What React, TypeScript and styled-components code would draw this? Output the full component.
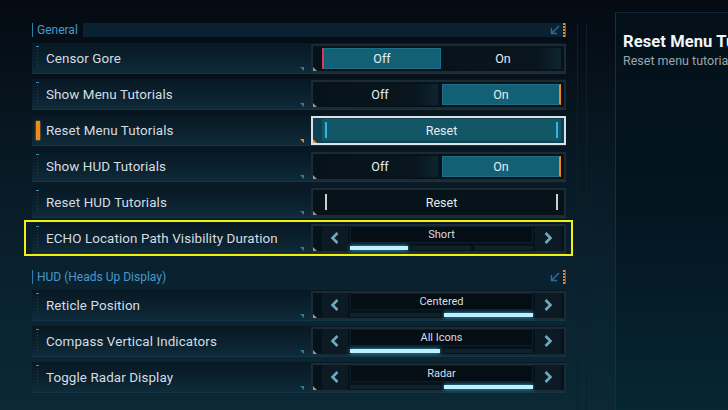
import React from 'react';
import styled, { createGlobalStyle, css } from 'styled-components';

const Global = createGlobalStyle`
  html, body {
    margin: 0;
    padding: 0;
    background: #040a12;
  }
  body {
    font-family: Roboto, "Liberation Sans", sans-serif;
    overflow: hidden;
  }
`;

const Page = styled.div`
  width: 728px;
  height: 410px;
  display: flex;
  padding-top: 12px;
  box-sizing: border-box;
  background: linear-gradient(180deg, #040a12 0%, #071620 30%, #0a2230 70%, #0b2834 100%);
  overflow: hidden;
`;

const Main = styled.div`
  width: 534px;
  margin-left: 32px;
  padding-top: 11px;
  display: flex;
  flex-direction: column;
`;

const Rails = styled.div`
  width: 10px;
  margin-left: 11px;
  margin-top: 12px;
  border-left: 1px solid #0e1f2a;
  border-right: 1px solid #0e1f2a;
  box-sizing: border-box;
`;

const Detail = styled.div`
  flex: 1;
  min-width: 0;
  margin-left: 28px;
  padding: 19px 0 0 7px;
  background: linear-gradient(180deg, #03101a 0%, #041520 50%, #062633 100%);
  border-left: 1px solid #12303d;
  border-top: 1px solid #0f2633;
  white-space: nowrap;
  overflow: hidden;
`;

const DetailTitle = styled.div`
  font-size: 16.5px;
  font-weight: 700;
  color: #f2f5f7;
  letter-spacing: 0.1px;
`;

const DetailText = styled.div`
  margin-top: 2px;
  font-size: 12.5px;
  color: #9aa6ad;
`;

const SectionHead = styled.div<{ $top?: number }>`
  display: flex;
  align-items: stretch;
  height: 14px;
  margin-top: ${(p) => p.$top ?? 0}px;
`;

const SectionTitle = styled.div`
  border-left: 1px solid #2a7fb0;
  padding-left: 4px;
  font-size: 12px;
  line-height: 14px;
  color: #4a98c8;
`;

const SectionBar = styled.div`
  flex: 1;
  margin-left: 5px;
  background: #0a2131;
  display: flex;
  justify-content: flex-end;
  align-items: center;
  gap: 3px;
`;

const DashMark = styled.div`
  width: 2px;
  height: 14px;
  background: repeating-linear-gradient(180deg, #e88a2a 0 2px, transparent 2px 3px);
  border-right: 1px solid #2a6f96;
`;

const Rows = styled.div`
  display: flex;
  flex-direction: column;
  gap: 5px;
  margin-top: 6px;
`;

const Row = styled.div<{ $highlight?: boolean }>`
  position: relative;
  height: 31px;
  display: flex;
  align-items: center;
  background: linear-gradient(180deg, #081823 0%, #0b2230 60%, #0f2b3a 100%);
  border-bottom: 1px solid #143545;
  box-sizing: border-box;
  ${(p) =>
    p.$highlight &&
    css`
      &::after {
        content: '';
        position: absolute;
        inset: -3px -7px -3px -8px;
        border: 2px solid #f2f010;
        pointer-events: none;
      }
    `}
`;

const Marker = styled.div<{ $focus?: boolean }>`
  width: 4px;
  align-self: stretch;
  margin: 3px 0 3px 4px;
  position: relative;
  ${(p) =>
    p.$focus
      ? css`
          &::before {
            content: '';
            position: absolute;
            left: 0;
            top: 3px;
            width: 4px;
            height: 19px;
            background: #f08a18;
            box-shadow: 0 0 2px #f0a040;
          }
        `
      : css`
          &::before {
            content: '';
            position: absolute;
            left: 0;
            top: 0;
            width: 3px;
            height: 1px;
            background: #3a90b0;
          }
          &::after {
            content: '';
            position: absolute;
            left: 1px;
            top: 3px;
            bottom: 0;
            width: 1px;
            background: repeating-linear-gradient(180deg, #1f4656 0 1px, transparent 1px 3px);
          }
        `}
`;

const Label = styled.div`
  flex: 1;
  padding-left: 6px;
  font-size: 13.4px;
  color: #d6dde1;
  letter-spacing: 0.1px;
`;

const CornerTick = styled.div<{ $focus?: boolean }>`
  width: 0;
  height: 0;
  align-self: flex-end;
  margin: 0 7px 2px 0;
  border-left: 4px solid transparent;
  border-top: 4px solid ${(p) => (p.$focus ? '#e08a20' : '#2c7ea0')};
`;

const Control = styled.div<{ $focus?: boolean }>`
  position: relative;
  width: 255px;
  height: 29px;
  box-sizing: border-box;
  border: 2px solid ${(p) => (p.$focus ? '#d9e2e6' : '#1b2b35')};
  background: ${(p) => (p.$focus ? '#0e4250' : '#07131b')};
  display: flex;
  align-items: center;
  padding: 0 3px 0 9px;
  &::before {
    content: '';
    position: absolute;
    left: 0;
    bottom: 0;
    width: 0;
    height: 0;
    border-left: 4px solid ${(p) => (p.$focus ? '#e08a20' : '#8a98a0')};
    border-top: 4px solid transparent;
  }
`;

const ToggleWrap = styled.div`
  flex: 1;
  height: 21px;
  display: flex;
  gap: 4px;
`;

const Segment = styled.div<{ $on?: boolean; $edge?: 'left' | 'right' }>`
  flex: 1;
  display: flex;
  align-items: center;
  justify-content: center;
  font-size: 12.5px;
  color: #e6ecef;
  background: ${(p) => (p.$on ? '#136075' : 'linear-gradient(90deg, #07131b 0%, #09161e 80%, #0d2530 100%)')};
  box-sizing: border-box;
  ${(p) => p.$on && css`border: 1px solid #1a7088;`}
  ${(p) => p.$on && p.$edge === 'left' && css`border-left: 2px solid #d83a5c;`}
  ${(p) => p.$on && p.$edge === 'right' && css`border-right: 2px solid #ee8a24;`}
`;

const ResetBtn = styled.div<{ $focus?: boolean }>`
  flex: 1;
  height: 22px;
  display: flex;
  align-items: center;
  justify-content: space-between;
  padding: 0 3px;
  box-sizing: border-box;
  background: ${(p) => (p.$focus ? '#135767' : '#07131b')};
  font-size: 12.5px;
  color: #e6ecef;
`;

const Bar = styled.div<{ $focus?: boolean }>`
  width: 2px;
  height: 16px;
  background: ${(p) => (p.$focus ? '#29b8e8' : '#c8d0d4')};
`;

const ArrowBox = styled.div`
  width: 26px;
  height: 25px;
  display: flex;
  align-items: center;
  justify-content: center;
  background: #0b1a23;
`;

const Center = styled.div`
  flex: 1;
  height: 25px;
  margin: 0 2px;
  display: flex;
  flex-direction: column;
`;

const Value = styled.div`
  height: 17px;
  display: flex;
  align-items: center;
  justify-content: center;
  background: #050e15;
  border: 1px solid #0d1e28;
  box-sizing: border-box;
  font-size: 11px;
  color: #d6dde1;
`;

const Steps = styled.div`
  margin-top: 3px;
  height: 4px;
  display: flex;
  gap: 4px;
`;

const Step = styled.div<{ $on?: boolean }>`
  flex: 1;
  background: ${(p) => (p.$on ? '#bdf1ff' : '#0e222d')};
  ${(p) => p.$on && css`box-shadow: 0 0 4px #3cc0e8;`}
`;

const Chevron = ({ dir }: { dir: 'left' | 'right' }) => (
  <svg width="10" height="12" viewBox="0 0 10 12">
    <path
      d={dir === 'left' ? 'M7.5 1 L2.5 6 L7.5 11' : 'M2.5 1 L7.5 6 L2.5 11'}
      fill="none"
      stroke="#6fa8c0"
      strokeWidth="2.6"
    />
  </svg>
);

const CornerIcon = () => (
  <svg width="10" height="10" viewBox="0 0 10 10">
    <path d="M9 1 L2 8 M1.5 3 V8.5 H7" fill="none" stroke="#2a6f96" strokeWidth="1.4" />
  </svg>
);

type Setting =
  | { label: string; kind: 'toggle'; on: boolean }
  | { label: string; kind: 'reset' }
  | { label: string; kind: 'select'; value: string; steps: number; index: number };

const general: Setting[] = [
  { label: 'Censor Gore', kind: 'toggle', on: false },
  { label: 'Show Menu Tutorials', kind: 'toggle', on: true },
  { label: 'Reset Menu Tutorials', kind: 'reset' },
  { label: 'Show HUD Tutorials', kind: 'toggle', on: true },
  { label: 'Reset HUD Tutorials', kind: 'reset' },
  { label: 'ECHO Location Path Visibility Duration', kind: 'select', value: 'Short', steps: 3, index: 0 },
];

const hud: Setting[] = [
  { label: 'Reticle Position', kind: 'select', value: 'Centered', steps: 2, index: 1 },
  { label: 'Compass Vertical Indicators', kind: 'select', value: 'All Icons', steps: 2, index: 0 },
  { label: 'Toggle Radar Display', kind: 'select', value: 'Radar', steps: 2, index: 1 },
];

function SettingControl({ s, focus }: { s: Setting; focus: boolean }) {
  if (s.kind === 'toggle') {
    return (
      <Control>
        <ToggleWrap>
          <Segment $on={!s.on} $edge="left">Off</Segment>
          <Segment $on={s.on} $edge="right">On</Segment>
        </ToggleWrap>
      </Control>
    );
  }
  if (s.kind === 'reset') {
    return (
      <Control $focus={focus}>
        <ResetBtn $focus={focus}>
          <Bar $focus={focus} />
          Reset
          <Bar $focus={focus} />
        </ResetBtn>
      </Control>
    );
  }
  return (
    <Control>
      <ArrowBox><Chevron dir="left" /></ArrowBox>
      <Center>
        <Value>{s.value}</Value>
        <Steps>
          {Array.from({ length: s.steps }).map((_, i) => (
            <Step key={i} $on={i === s.index} />
          ))}
        </Steps>
      </Center>
      <ArrowBox><Chevron dir="right" /></ArrowBox>
    </Control>
  );
}

function SettingRow({ s, focus, highlight }: { s: Setting; focus?: boolean; highlight?: boolean }) {
  return (
    <Row $highlight={highlight}>
      <Marker $focus={focus} />
      <Label>{s.label}</Label>
      <CornerTick $focus={focus} />
      <SettingControl s={s} focus={!!focus} />
    </Row>
  );
}

function Section({ title, items, top, focusIdx, highlightIdx }: {
  title: string;
  items: Setting[];
  top?: number;
  focusIdx?: number;
  highlightIdx?: number;
}) {
  return (
    <>
      <SectionHead $top={top}>
        <SectionTitle>{title}</SectionTitle>
        <SectionBar>
          <CornerIcon />
          <DashMark />
        </SectionBar>
      </SectionHead>
      <Rows>
        {items.map((s, i) => (
          <SettingRow key={s.label} s={s} focus={i === focusIdx} highlight={i === highlightIdx} />
        ))}
      </Rows>
    </>
  );
}

export default function App() {
  return (
    <>
      <Global />
      <Page>
        <Main>
          <Section title="General" items={general} focusIdx={2} highlightIdx={5} />
          <Section title="HUD (Heads Up Display)" items={hud} top={16} />
        </Main>
        <Rails />
        <Detail>
          <DetailTitle>Reset Menu Tutorials</DetailTitle>
          <DetailText>Reset menu tutorials</DetailText>
        </Detail>
      </Page>
    </>
  );
}
